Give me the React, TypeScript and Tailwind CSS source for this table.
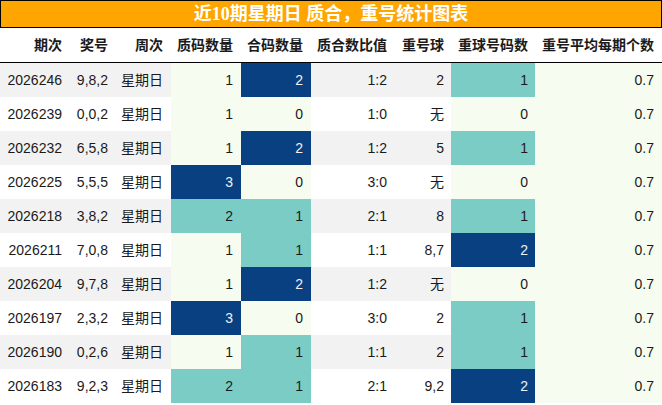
// 近10期星期日 质合/重号统计表 — 渐变色单元格按列取值区间着色（GnBu）。

type Row = [string, string, string, number, number, string, string, number, string];

const ROWS: Row[] = [
  ['2026246', '9,8,2', '星期日', 1, 2, '1:2', '2', 1, '0.7'],
  ['2026239', '0,0,2', '星期日', 1, 0, '1:0', '无', 0, '0.7'],
  ['2026232', '6,5,8', '星期日', 1, 2, '1:2', '5', 1, '0.7'],
  ['2026225', '5,5,5', '星期日', 3, 0, '3:0', '无', 0, '0.7'],
  ['2026218', '3,8,2', '星期日', 2, 1, '2:1', '8', 1, '0.7'],
  ['2026211', '7,0,8', '星期日', 1, 1, '1:1', '8,7', 2, '0.7'],
  ['2026204', '9,7,8', '星期日', 1, 2, '1:2', '无', 0, '0.7'],
  ['2026197', '2,3,2', '星期日', 3, 0, '3:0', '2', 1, '0.7'],
  ['2026190', '0,2,6', '星期日', 1, 1, '1:1', '2', 1, '0.7'],
  ['2026183', '9,2,3', '星期日', 2, 1, '2:1', '9,2', 2, '0.7'],
];

const HEADERS = ['期次', '奖号', '周次', '质码数量', '合码数量', '质合数比值', '重号球', '重球号码数', '重号平均每期个数'];
// 每列右内边距，对齐原图文字右端
const PAD = ['pr-[6px]', 'pr-[7px]', 'pr-[8px]', 'pr-[8px]', 'pr-[8px]', 'pr-[5px]', 'pr-[7px]', 'pr-[7px]', 'pr-[8px]'];
const GRID = 'grid grid-cols-[68px_47px_56px_70px_70px_81px_59px_84px_127px]';
const FONT = "font-['Liberation_Sans','Noto_Sans_CJK_SC',sans-serif]";

// 低 / 中 / 高
const SHADES = ['bg-[#f7fcf0] text-[#1a1a1a]', 'bg-[#7bccc4] text-[#1a1a1a]', 'bg-[#084081] text-[#f1f1f1]'];

function shade(v: number, min: number) {
  return SHADES[Math.max(0, Math.min(2, v - min))];
}

export default function App() {
  return (
    <div className={`w-[662px] h-[405px] bg-white overflow-hidden ${FONT}`}>
      <div className="h-[28px] border border-black bg-[#ffa500] flex items-center justify-center">
        <span className="text-white font-bold text-[18px] leading-none font-['Liberation_Serif','Noto_Sans_CJK_SC',serif]">
          近10期星期日 质合，重号统计图表
        </span>
      </div>

      <div className={`${GRID} h-[35px] border-b border-black text-[14px] font-bold text-[#1a1a1a]`}>
        {HEADERS.map((h, i) => (
          <div key={h} className={`flex items-center justify-end whitespace-nowrap ${PAD[i]}`}>{h}</div>
        ))}
      </div>

      {ROWS.map((r, ri) => {
        const rowBg = ri % 2 === 0 ? 'bg-[#f2f2f2]' : 'bg-white';
        return (
          <div key={r[0]} className={`${GRID} h-[34px] text-[14px] text-[#1a1a1a] ${rowBg}`}>
            {r.map((c, ci) => {
              let bg = '';
              if (ci === 3) bg = shade(c as number, 1);
              else if (ci === 4 || ci === 7) bg = shade(c as number, 0);
              else if (ci === 8) bg = SHADES[0];
              return (
                <div key={ci} className={`flex items-center justify-end whitespace-nowrap ${PAD[ci]} ${bg}`}>{c}</div>
              );
            })}
          </div>
        );
      })}
    </div>
  );
}
